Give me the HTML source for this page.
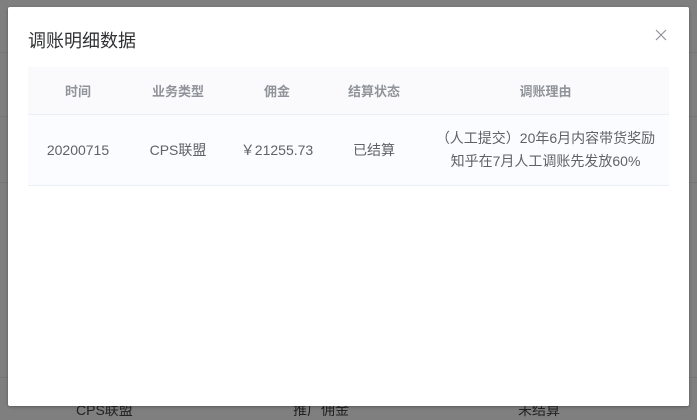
<!DOCTYPE html><html><head><meta charset="utf-8"><style>
body{margin:0;width:697px;height:420px;background:#7f7f7f;position:relative;overflow:hidden;font-family:"Liberation Sans","Noto Sans CJK SC",sans-serif}
.ln{position:absolute;height:1px;background:#767676}
.bg{position:absolute;top:400px;font-size:14px;color:#222}
.modal{position:absolute;left:8px;top:7px;width:681px;height:399px;background:#fff;border-radius:2px;box-shadow:0 1px 3px rgba(0,0,0,.3)}
.title{position:absolute;left:20px;top:20px;font-size:18px;color:#303133}
.close{position:absolute;left:647px;top:22px}
table{position:absolute;left:20px;top:60px;width:641px;border-collapse:collapse;text-align:center}
th{height:47px;background:#fafafc;color:#909399;font-size:13px;font-weight:bold;border-bottom:1px solid #ebeef5;padding:0}
td{height:70px;background:#fafcff;color:#606266;font-size:14px;border-bottom:1px solid #ebeef5;padding:0;line-height:23px}
</style></head><body>
<div class="ln" style="left:0;width:697px;top:52px"></div>
<div class="ln" style="left:0;width:697px;top:116px"></div>
<div class="ln" style="left:0;width:697px;top:182px"></div>
<div class="ln" style="left:0;width:697px;top:377px"></div>
<div class="bg" style="left:76px">CPS联盟</div>
<div class="bg" style="left:293px">推广佣金</div>
<div class="bg" style="left:518px">未结算</div>
<div class="modal">
<div class="title">调账明细数据</div>
<svg class="close" width="12" height="12" viewBox="0 0 12 12"><path d="M1 1L11 11M11 1L1 11" stroke="#909399" stroke-width="1.2"/></svg>
<table><tr><th style="width:100px">时间</th><th style="width:100px">业务类型</th><th style="width:98px">佣金</th><th style="width:96px">结算状态</th><th>调账理由</th></tr>
<tr><td>20200715</td><td>CPS联盟</td><td>￥21255.73</td><td>已结算</td><td>（人工提交）20年6月内容带货奖励<br>知乎在7月人工调账先发放60%</td></tr></table>
</div>
</body></html>
